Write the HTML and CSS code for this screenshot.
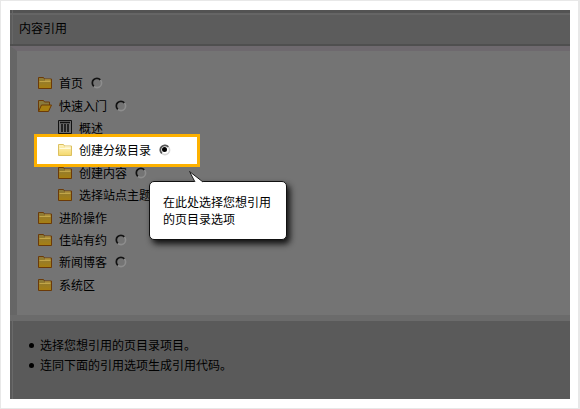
FILE: index.html
```html
<!DOCTYPE html>
<html lang="zh">
<head>
<meta charset="utf-8">
<title>内容引用</title>
<link rel="stylesheet" href="styles.css">
</head>
<body>
<svg class="defs" width="0" height="0" aria-hidden="true">
  <defs>
    <linearGradient id="fold-dark" x1="0" y1="0" x2="0" y2="1">
      <stop offset="0" stop-color="#8a7a3c"/>
      <stop offset="1" stop-color="#a87f10"/>
    </linearGradient>
    <linearGradient id="fold-light" x1="0" y1="0" x2="0" y2="1">
      <stop offset="0" stop-color="#fff4c0"/>
      <stop offset="1" stop-color="#f4d86c"/>
    </linearGradient>
    <symbol id="folder" viewBox="0 0 14 12">
      <path d="M.5 11.500V.5h5l1 1.500h7v9.500z" fill="var(--fill)" stroke="var(--edge)"/>
      <path d="M1.500 4.500h11" stroke="var(--line)" fill="none"/>
      <path d="M7 2.500h5.500v1H7z" fill="var(--line)"/>
    </symbol>
    <symbol id="folder-open" viewBox="0 0 14 12">
      <path d="M.5 11.500V.5h5l1 1.500h5v3" fill="#8a7a3c" stroke="#6b3a08"/>
      <path d="M.5 11.500l3-6.500h10l-3 6.500z" fill="#a87f10" stroke="#6b3a08"/>
    </symbol>
    <symbol id="radio" viewBox="0 0 12 12">
      <circle cx="6" cy="6" r="4.600" fill="none" stroke="var(--rim)" stroke-width="1.600"/>
      <path d="M9.300 2.800A4.600 4.600 0 1 0 2.800 9.300" fill="none" stroke="var(--arc)" stroke-width="1.800"/>
    </symbol>
  </defs>
</svg>
<main class="panel">
  <header class="head"><h1 class="title">内容引用</h1></header>
  <section class="content">
    <ul class="tree">
      <li class="row"><svg class="folder"><use href="#folder"/></svg><span>首页</span><svg class="radio"><use href="#radio"/></svg></li>
      <li class="row"><svg class="folder"><use href="#folder-open"/></svg><span>快速入门</span><svg class="radio"><use href="#radio"/></svg></li>
      <li class="row sub"><svg class="doc" viewBox="0 0 14 14"><path d="M.5.5h13v13H.5z" fill="#6c6c6c" stroke="#111"/><path d="M2 2.500h10" stroke="#111" stroke-width="1.500"/><path d="M3 4h2v8H3zM6 4h2v8H6zM9 4h2v8H9z" fill="#222"/></svg><span>概述</span></li>
      <li class="row sub selected"><svg class="folder light"><use href="#folder"/></svg><span>创建分级目录</span><span class="picked"><svg class="radio light"><use href="#radio"/></svg><i class="dot"></i></span></li>
      <li class="row sub"><svg class="folder"><use href="#folder"/></svg><span>创建内容</span><svg class="radio"><use href="#radio"/></svg></li>
      <li class="row sub"><svg class="folder"><use href="#folder"/></svg><span>选择站点主题</span></li>
      <li class="row"><svg class="folder"><use href="#folder"/></svg><span>进阶操作</span></li>
      <li class="row"><svg class="folder"><use href="#folder"/></svg><span>佳站有约</span><svg class="radio"><use href="#radio"/></svg></li>
      <li class="row"><svg class="folder"><use href="#folder"/></svg><span>新闻博客</span><svg class="radio"><use href="#radio"/></svg></li>
      <li class="row"><svg class="folder"><use href="#folder"/></svg><span>系统区</span></li>
    </ul>
    <aside class="callout">
      <svg class="tail" viewBox="0 0 15 12"><path d="M0 0l6 11.500h9z" fill="#fff"/><path d="M.5.500L6 11M.5.500L14 11" stroke="#111" fill="none"/></svg>
      <p class="callout-text">在此处选择您想引用<br>的页目录选项</p>
    </aside>
  </section>
  <footer class="foot">
    <ul class="notes">
      <li>选择您想引用的页目录项目。</li>
      <li>连同下面的引用选项生成引用代码。</li>
    </ul>
  </footer>
</main>
</body>
</html>
```
FILE: styles.css
```css
* { box-sizing: border-box; }
html, body { margin: 0; }
body {
  width: 580px;
  height: 409px;
  padding: 9px 8px 9px 9px;
  background: #fff;
  border-style: solid;
  border-color: #e8e8e8;
  border-width: 1px 2px 1px 1px;
  overflow: hidden;
  font: 12px/1 "Noto Sans CJK SC", "Liberation Sans", sans-serif;
  color: #000;
}
.defs { position: absolute; }
ul { margin: 0; padding: 0; list-style: none; }
.panel {
  display: flex;
  flex-direction: column;
  width: 560px;
  height: 389px;
  background: #5a5a5a;
}
.head {
  height: 36px;
  padding: 0 0 0 9px;
  display: flex;
  align-items: center;
  background:
    linear-gradient(90deg, transparent 2px, #666 2px 3px, transparent 3px),
    linear-gradient(#535353 0 3px, #656565 3px 5px, #5c5c5c 5px);
  border-bottom: 2px solid #4f4f4f;
}
.title { margin: 2px 0 0; font-size: 12px; font-weight: normal; }
.content {
  position: relative;
  height: 269px;
  padding: 21px 0 0 28px;
  background: #747474;
  border-top: 5px solid #6e696e;
  border-left: 7px solid #666;
}
.row {
  display: flex;
  align-items: center;
  height: 22.400px;
  position: relative;
  margin-left: -7px;
}
.row > span { position: relative; }
.sub { padding-left: 20px; }
.folder {
  width: 14px;
  height: 12px;
  margin-right: 7px;
  position: relative;
  --fill: url(#fold-dark);
  --edge: #6b3a08;
  --line: #c2a548;
}
.folder.light {
  --fill: url(#fold-light);
  --edge: #dcc060;
  --line: #fffbe0;
}
.doc { width: 14px; height: 14px; margin: 0 7px 2px 0; }
.radio {
  width: 12px;
  height: 12px;
  margin-left: 8px;
  --rim: #8d8d8d;
  --arc: #111;
}
.radio.light { --rim: #d8d8d8; --arc: #555; position: relative; }
.selected::before {
  content: "";
  box-sizing: border-box;
  position: absolute;
  left: -4px;
  top: -5px;
  width: 166px;
  height: 33px;
  background: #fff;
  border: 3px solid #fdb100;
}
.picked { display: flex; }
.dot {
  position: absolute;
  left: 11px;
  top: 3px;
  width: 5px;
  height: 5px;
  border-radius: 50%;
  background: #000;
}
.callout {
  position: absolute;
  left: 132px;
  top: 130px;
  width: 138px;
  height: 59px;
  background: #fff;
  border: 1px solid #111;
  border-radius: 5px;
  box-shadow: 3px 4px 6px #111;
  padding: 11px 0 0 13px;
}
.tail {
  position: absolute;
  left: 39px;
  top: -11px;
  width: 15px;
  height: 12px;
}
.callout-text { margin: 0; line-height: 17px; }
.foot {
  flex: 1;
  padding: 14px 0 0 30px;
  border-top: 6px solid #6b6b6b;
  background: linear-gradient(90deg, #5a5a5a 2px, #696969 2px 3px, #5a5a5a 3px);
}
.notes li { position: relative; height: 20px; line-height: 20px; }
.notes li::before {
  content: "";
  position: absolute;
  left: -11px;
  top: 8px;
  width: 5px;
  height: 5px;
  border-radius: 50%;
  background: #000;
}
```
